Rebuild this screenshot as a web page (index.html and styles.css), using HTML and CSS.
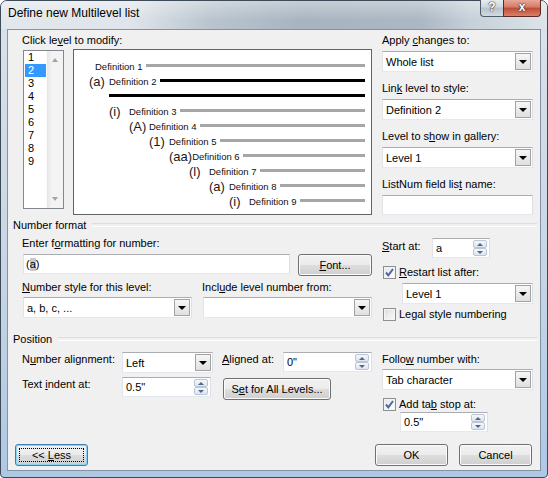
FILE: index.html
```html
<!DOCTYPE html>
<html lang="en">
<head>
    <meta charset="UTF-8">
    <title>Define new Multilevel list</title>
    <link rel="stylesheet" href="styles.css">
</head>
<body>
<div class="window">
    <div class="titlebar">
        <span class="title">Define new Multilevel list</span>
        <div class="caption">
            <span class="cap-btn help">?</span>
            <span class="cap-btn close">x</span>
        </div>
    </div>

    <div class="client">
        <div class="top">
            <div class="main">
                <div class="label gap3">Click le<u>v</u>el to modify:</div>
                <div class="pick">
                    <div class="levels">
                        <ul>
                            <li>1</li>
                            <li class="sel">2</li>
                            <li>3</li>
                            <li>4</li>
                            <li>5</li>
                            <li>6</li>
                            <li>7</li>
                            <li>8</li>
                            <li>9</li>
                        </ul>
                        <div class="vscroll">
                            <span class="arr up"></span>
                            <span class="arr down"></span>
                        </div>
                    </div>
                    <div class="preview">
                        <div class="row lv1"><span class="def">Definition 1</span><span class="rule"></span></div>
                        <div class="row lv2"><span class="num">(a)</span><span class="def">Definition 2</span><span class="rule dark"></span></div>
                        <div class="row lv2b"><span class="rule dark"></span></div>
                        <div class="row lv3"><span class="num">(i)</span><span class="def">Definition 3</span><span class="rule"></span></div>
                        <div class="row lv4"><span class="num">(A)</span><span class="def">Definition 4</span><span class="rule"></span></div>
                        <div class="row lv5"><span class="num">(1)</span><span class="def">Definition 5</span><span class="rule"></span></div>
                        <div class="row lv6"><span class="num">(aa)</span><span class="def">Definition 6</span><span class="rule"></span></div>
                        <div class="row lv7"><span class="num">(l)</span><span class="def">Definition 7</span><span class="rule"></span></div>
                        <div class="row lv8"><span class="num">(a)</span><span class="def">Definition 8</span><span class="rule"></span></div>
                        <div class="row lv9"><span class="num">(i)</span><span class="def">Definition 9</span><span class="rule"></span></div>
                    </div>
                </div>
            </div>

            <div class="side">
                <div class="field">
                    <div class="label">Apply <u>c</u>hanges to:</div>
                    <div class="combo"><span class="val">Whole list</span><span class="drop"></span></div>
                </div>
                <div class="field">
                    <div class="label">Lin<u>k</u> level to style:</div>
                    <div class="combo"><span class="val">Definition 2</span><span class="drop"></span></div>
                </div>
                <div class="field">
                    <div class="label">Level to s<u>h</u>ow in gallery:</div>
                    <div class="combo"><span class="val">Level 1</span><span class="drop"></span></div>
                </div>
                <div class="field last">
                    <div class="label">ListNum field lis<u>t</u> name:</div>
                    <div class="textbox"></div>
                </div>
            </div>
        </div>

        <div class="group-head">Number format</div>
        <div class="nf">
            <div class="main">
                <div class="label gap4">Enter f<u>o</u>rmatting for number:</div>
                <div class="fmt-row">
                    <div class="textbox fmt"><span>(</span><span class="hl">a</span><span>)</span></div>
                    <div class="btn font-btn"><span class="cap"><u>F</u>ont...</span></div>
                </div>
                <div class="two">
                    <div class="col">
                        <div class="label gap3"><u>N</u>umber style for this level:</div>
                        <div class="combo"><span class="val">a, b, c, ...</span><span class="drop"></span></div>
                    </div>
                    <div class="col">
                        <div class="label gap3">Incl<u>u</u>de level number from:</div>
                        <div class="combo"><span class="val"></span><span class="drop"></span></div>
                    </div>
                </div>
            </div>

            <div class="side">
                <div class="start-row">
                    <span class="label start-lbl"><u>S</u>tart at:</span>
                    <div class="spin start"><span class="val">a</span><span class="spin-btns"><span class="sb"><i class="up"></i></span><span class="sb"><i class="down"></i></span></span></div>
                </div>
                <div class="check-row restart">
                    <span class="check on"><svg viewBox="0 0 11 11" width="11" height="11"><path d="M2 5.5l2.3 2.8L9 2" fill="none" stroke="#4b67a4" stroke-width="2"/></svg></span>
                    <span><u>R</u>estart list after:</span>
                </div>
                <div class="combo restart-combo"><span class="val">Level 1</span><span class="drop"></span></div>
                <div class="check-row legal">
                    <span class="check"></span>
                    <span>Legal style numbering</span>
                </div>
            </div>
        </div>

        <div class="group-head">Position</div>
        <div class="pos">
            <div class="main">
                <div class="prow">
                    <span class="label plbl">N<u>u</u>mber alignment:</span>
                    <div class="combo align"><span class="val">Left</span><span class="drop"></span></div>
                    <span class="label albl"><u>A</u>ligned at:</span>
                    <div class="spin pspin"><span class="val">0"</span><span class="spin-btns"><span class="sb"><i class="up"></i></span><span class="sb"><i class="down"></i></span></span></div>
                </div>
                <div class="prow second">
                    <span class="label plbl">Text <u>i</u>ndent at:</span>
                    <div class="spin pspin indent"><span class="val">0.5"</span><span class="spin-btns"><span class="sb"><i class="up"></i></span><span class="sb"><i class="down"></i></span></span></div>
                    <div class="btn all-btn"><span class="cap">S<u>e</u>t for All Levels...</span></div>
                </div>
            </div>

            <div class="side">
                <div class="label gap3">Follo<u>w</u> number with:</div>
                <div class="combo"><span class="val">Tab character</span><span class="drop"></span></div>
                <div class="check-row tabstop">
                    <span class="check on"><svg viewBox="0 0 11 11" width="11" height="11"><path d="M2 5.5l2.3 2.8L9 2" fill="none" stroke="#4b67a4" stroke-width="2"/></svg></span>
                    <span>Add ta<u>b</u> stop at:</span>
                </div>
                <div class="spin tab-spin"><span class="val">0.5"</span><span class="spin-btns"><span class="sb"><i class="up"></i></span><span class="sb"><i class="down"></i></span></span></div>
            </div>
        </div>

        <div class="footer">
            <div class="btn less"><span class="focus">&lt;&lt; <u>L</u>ess</span></div>
            <div class="btn ok"><span class="cap">OK</span></div>
            <div class="btn cancel"><span class="cap">Cancel</span></div>
        </div>
    </div>
</div>
</body>
</html>
```

FILE: styles.css
```css
* {
    box-sizing: border-box;
}
body {
    margin: 0;
    font-family: 'Liberation Sans', Arial, sans-serif;
    font-size: 11px;
    color: #000;
    background: #fff;
}
ul {
    list-style: none;
    margin: 0;
    padding: 0;
}

/* window frame */
.window {
    width: 548px;
    height: 478px;
    border: 1px solid #3d4a58;
    border-radius: 7px 7px 4px 4px;
    padding: 0 6px 6px;
    display: flex;
    flex-direction: column;
    background: linear-gradient(to bottom, #dbe2e9 0%, #c8d6e4 55%, #aec8e4 100%);
}
.titlebar {
    height: 28px;
    margin: 0 -6px;
    padding: 0 6px 0 7px;
    display: flex;
    align-items: flex-start;
    border-radius: 6px 6px 0 0;
    background:
        linear-gradient(to bottom, rgba(255,255,255,0.35), rgba(255,255,255,0) 70%),
        linear-gradient(to right, #e2e7ec 0, #dfe5ea 130px, #b9c4ce 210px, #a7b4c0 300px, #abb7c2 420px, #c6d0d9 470px, #dde4ea 548px);
}
.title {
    font-size: 12px;
    line-height: 24px;
    color: #000;
}
.caption {
    margin-left: auto;
    margin-top: -1px;
    display: flex;
}
.cap-btn {
    height: 17px;
    border: 1px solid #4e5b68;
    border-top: none;
    color: #fff;
    font-weight: bold;
    font-size: 12px;
    line-height: 15px;
    text-align: center;
    text-shadow: 0 0 2px #333, 0 0 1px #000;
}
.help {
    width: 23px;
    border-right: none;
    border-radius: 0 0 0 4px;
    background: linear-gradient(to bottom, #e7ecf0 0%, #cdd6de 45%, #b5c1cc 50%, #d3dbe2 100%);
}
.close {
    width: 38px;
    border-color: #5b2a24;
    border-radius: 0 0 4px 0;
    background: linear-gradient(to bottom, #e9a899 0%, #d47a66 45%, #c14a33 50%, #d9806a 100%);
}

/* client area */
.client {
    flex: 1;
    background: #f0f0f0;
    border: 1px solid #8393a6;
    padding: 3px 7px 0 14px;
    display: flex;
    flex-direction: column;
}
.label {
    display: block;
    height: 14px;
    line-height: 14px;
    white-space: nowrap;
}
.gap3 {
    margin-bottom: 3px;
}
.gap4 {
    margin-bottom: 4px;
}
.main {
    width: 350px;
}
.side {
    width: 151px;
}

/* top section */
.top {
    display: flex;
    gap: 10px;
    height: 182px;
}
.pick {
    display: flex;
    gap: 9px;
    align-items: flex-start;
}
.levels {
    margin-left: 1px;
    width: 41px;
    height: 159px;
    border: 1px solid #828790;
    background: #fff;
    display: flex;
}
.levels ul {
    width: 22px;
    padding-left: 1px;
}
.levels li {
    height: 13px;
    line-height: 13px;
    padding-left: 3px;
}
.levels li.sel {
    background: #3399ff;
    color: #fff;
}
.vscroll {
    width: 17px;
    background: linear-gradient(to right, #e6e6e6, #f3f3f3 30%, #f3f3f3);
    border-left: 1px solid #fafafa;
    display: flex;
    flex-direction: column;
    justify-content: space-between;
    align-items: center;
    padding: 7px 0;
}
.arr {
    width: 0;
    height: 0;
    border-left: 3.5px solid transparent;
    border-right: 3.5px solid transparent;
}
.arr.up {
    border-bottom: 4px solid #a4a4a4;
}
.arr.down {
    border-top: 4px solid #a4a4a4;
}

.preview {
    flex: 1;
    height: 166px;
    margin-top: -1px;
    border: 1px solid #646464;
    background: #fff;
    padding: 8px 6px 0 0;
}
.row {
    display: flex;
    align-items: center;
    height: 15px;
    white-space: nowrap;
}
.num {
    font-size: 13px;
    min-width: 20px;
    color: #1a1a1a;
    padding-top: 2px;
}
.def {
    font-size: 9.5px;
    color: #111;
    padding-top: 2px;
}
.rule {
    flex: 1;
    height: 3px;
    margin-left: 3px;
    background: #a6a6a6;
}
.rule.dark {
    background: #000;
}
.lv2b .rule {
    margin-left: 0;
}
.lv1 { padding-left: 21px; }
.lv2 { padding-left: 15px; }
.lv2b { padding-left: 35px; }
.lv3 { padding-left: 35px; }
.lv4 { padding-left: 55px; }
.lv5 { padding-left: 75px; }
.lv6 { padding-left: 95px; }
.lv7 { padding-left: 115px; }
.lv8 { padding-left: 135px; }
.lv9 { padding-left: 155px; }

.field {
    margin-bottom: 9px;
}
.field .label {
    margin-bottom: 4px;
}

/* controls */
.combo,
.textbox,
.spin {
    background: #fff;
    border: 1px solid #abadb3;
    border-color: #abadb3 #dbdfe6 #e3e9ef #e2e3ea;
    display: flex;
    align-items: center;
}
.combo {
    height: 21px;
}
.combo .val,
.spin .val {
    flex: 1;
    padding-left: 3px;
    white-space: nowrap;
}
.drop {
    width: 16px;
    height: 17px;
    margin-right: 1px;
    border: 1px solid #a3a3a3;
    background: linear-gradient(to bottom, #f6f6f6, #e0e0e0);
    position: relative;
}
.drop::after {
    content: "";
    position: absolute;
    left: 3px;
    top: 6px;
    border-left: 4px solid transparent;
    border-right: 4px solid transparent;
    border-top: 4px solid #000;
}
.textbox {
    height: 20px;
}
.spin {
    height: 20px;
}
.spin-btns {
    width: 14px;
    height: 16px;
    margin-right: 2px;
    display: flex;
    flex-direction: column;
}
.sb {
    flex: 1;
    border: 1px solid #b9c6d5;
    border-radius: 2px;
    background: linear-gradient(to bottom, #f5f8fb, #dde5ee);
    display: flex;
    align-items: center;
    justify-content: center;
}
.sb i {
    width: 0;
    height: 0;
    border-left: 3px solid transparent;
    border-right: 3px solid transparent;
}
.sb i.up {
    border-bottom: 3px solid #50668a;
}
.sb i.down {
    border-top: 3px solid #50668a;
}

.btn {
    height: 22px;
    border: 1px solid #707070;
    border-radius: 3px;
    background: linear-gradient(to bottom, #f2f2f2 0%, #ebebeb 50%, #dddddd 51%, #cfcfcf 100%);
    box-shadow: inset 0 0 0 1px #fbfbfb;
    display: flex;
    align-items: center;
    justify-content: center;
    white-space: nowrap;
}
.btn .cap {
    display: block;
}

/* group headings */
.group-head {
    display: flex;
    align-items: center;
    height: 14px;
    line-height: 14px;
    margin: 3px -4px 0 -9px;
}
.group-head::after {
    content: "";
    flex: 1;
    height: 2px;
    margin-left: 6px;
    border-top: 1px solid #d5dfe5;
    border-bottom: 1px solid #fff;
}

/* number format */
.nf {
    display: flex;
    gap: 10px;
    height: 97px;
}
.nf .main {
    padding-top: 4px;
}
.fmt-row {
    display: flex;
    gap: 8px;
    align-items: flex-start;
}
.fmt {
    width: 267px;
    margin-left: 1px;
    padding-left: 2px;
}
.hl {
    background: #c8c8c8;
    line-height: 13px;
}
.font-btn {
    width: 74px;
}
.two {
    display: flex;
    gap: 10px;
    margin-top: 4px;
}
.two .col {
    flex: 1;
}
.two .combo {
    margin-left: 1px;
}
.nf .side {
    padding-top: 6px;
}
.start-row {
    display: flex;
    align-items: center;
}
.start-lbl {
    width: 50px;
    margin-top: -4px;
}
.spin.start {
    width: 58px;
}
.check-row {
    display: flex;
    align-items: center;
    height: 14px;
    white-space: nowrap;
}
.check {
    width: 13px;
    height: 13px;
    margin: 0 3px 0 1px;
    border: 1px solid #8e8f8f;
    background: linear-gradient(135deg, #dcdcdc, #fbfbfb);
    box-shadow: inset 0 0 0 1px #f4f4f4;
    display: flex;
    align-items: center;
    justify-content: center;
}
.check.on {
    background: linear-gradient(135deg, #e6e6e6, #ffffff);
}
.restart {
    margin-top: 7px;
}
.restart-combo {
    margin: 4px 0 0 20px;
}
.legal {
    margin-top: 3px;
}

/* position */
.pos {
    display: flex;
    gap: 10px;
    height: 98px;
}
.pos .main,
.pos .side {
    padding-top: 6px;
}
.prow {
    display: flex;
    align-items: flex-start;
}
.prow.second {
    margin-top: 4px;
}
.plbl {
    width: 100px;
}
.combo.align {
    width: 91px;
}
.albl {
    width: 61px;
    margin-left: 9px;
}
.pspin {
    width: 89px;
}
.all-btn {
    width: 108px;
    margin: 1px 0 0 12px;
}
.tabstop {
    margin-top: 7px;
}
.tab-spin {
    width: 88px;
    margin: 1px 0 0 18px;
}

/* footer */
.footer {
    display: flex;
    margin-left: -7px;
    padding-right: 1px;
}
.footer .btn {
    width: 73px;
}
.less {
    border-color: #3c7fb1;
    box-shadow: inset 0 0 0 1px #8fd3f4;
    padding: 3px;
}
.less .focus {
    flex: 1;
    align-self: stretch;
    display: block;
    line-height: 12px;
    text-align: center;
    border: 1px dotted #000;
}
.ok {
    margin-left: auto;
}
.cancel {
    margin-left: 11px;
}
```
